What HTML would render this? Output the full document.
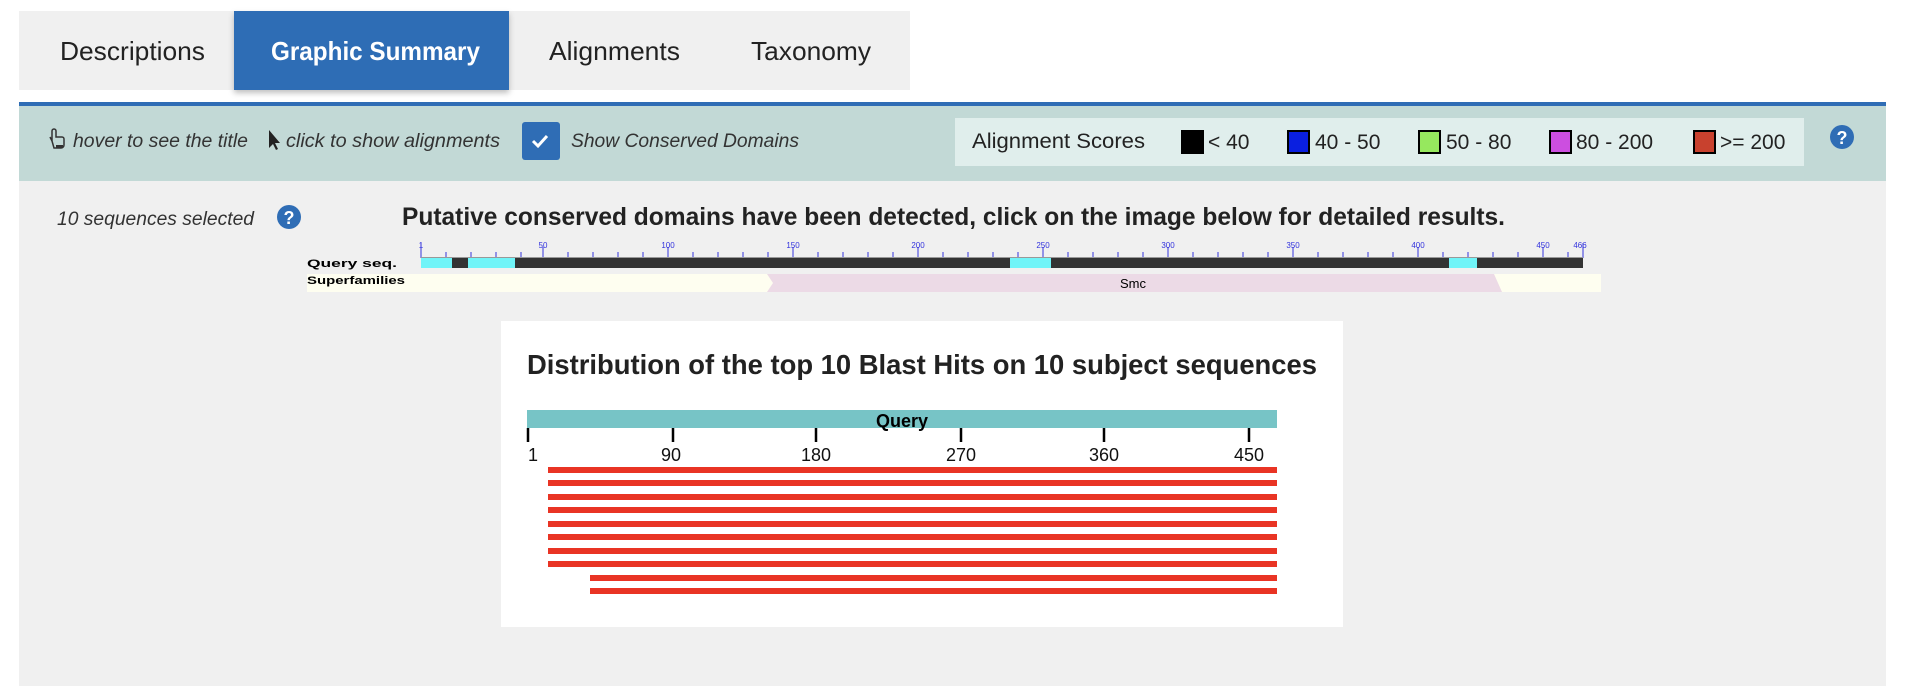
<!DOCTYPE html>
<html><head><meta charset="utf-8"><style>
html,body{margin:0;padding:0;background:#fff;width:1910px;height:686px;overflow:hidden}
svg{display:block}
text{font-family:"Liberation Sans",sans-serif}
</style></head><body>
<svg width="1910" height="686" viewBox="0 0 1910 686" xmlns="http://www.w3.org/2000/svg">
<defs><filter id="sh" x="-10%" y="-10%" width="120%" height="130%"><feDropShadow dx="0" dy="3" stdDeviation="3" flood-color="#000" flood-opacity="0.25"/></filter></defs>
<rect x="19" y="11" width="891" height="79" fill="#f0f0f0"/>
<rect x="234" y="11" width="275" height="79" fill="#2f6db5" filter="url(#sh)"/>
<text x="60" y="60" font-size="26" fill="#222" textLength="145" lengthAdjust="spacingAndGlyphs">Descriptions</text>
<text x="271" y="60" font-size="26" font-weight="bold" fill="#fff" textLength="209" lengthAdjust="spacingAndGlyphs">Graphic Summary</text>
<text x="549" y="60" font-size="26" fill="#222" textLength="131" lengthAdjust="spacingAndGlyphs">Alignments</text>
<text x="751" y="60" font-size="26" fill="#222" textLength="120" lengthAdjust="spacingAndGlyphs">Taxonomy</text>
<rect x="19" y="102" width="1867" height="4" fill="#2f6db5"/>
<rect x="19" y="106" width="1867" height="75" fill="#c2d9d6"/>
<rect x="19" y="181" width="1867" height="505" fill="#f0f0f0"/>
<path d="M52 141 l0-10 a2 2 0 0 1 4 0 l0 6 l6 0 a2 2 0 0 1 2 2 l0 6 a3 3 0 0 1-3 3 l-7 0 z M50 137 l2 4" fill="none" stroke="#333" stroke-width="1.5"/>
<rect x="56" y="145" width="7" height="3" fill="#333"/>
<text x="73" y="147" font-size="19" font-style="italic" fill="#333" textLength="175" lengthAdjust="spacingAndGlyphs">hover to see the title</text>
<path d="M269 130 l0 18 l4-4 l3 6 l2-1 l-3-6 l5 0 z" fill="#222"/>
<text x="286" y="147" font-size="19" font-style="italic" fill="#333" textLength="214" lengthAdjust="spacingAndGlyphs">click to show alignments</text>
<rect x="522" y="122" width="38" height="38" rx="3" fill="#2f6db5"/>
<path d="M533 141 l5 5 l9-10" fill="none" stroke="#fff" stroke-width="3"/>
<text x="571" y="147" font-size="19" font-style="italic" fill="#333" textLength="228" lengthAdjust="spacingAndGlyphs">Show Conserved Domains</text>
<rect x="955" y="118" width="849" height="48" fill="#e0eeec"/>
<text x="972" y="148" font-size="21" fill="#222" textLength="173" lengthAdjust="spacingAndGlyphs">Alignment Scores</text>
<rect x="1182" y="131" width="21" height="22" fill="#000" stroke="#000" stroke-width="2"/>
<text x="1208" y="149" font-size="21" fill="#222">&lt; 40</text>
<rect x="1288" y="131" width="21" height="22" fill="#0a1fe0" stroke="#000" stroke-width="2"/>
<text x="1315" y="149" font-size="21" fill="#222">40 - 50</text>
<rect x="1419" y="131" width="21" height="22" fill="#96e85e" stroke="#000" stroke-width="2"/>
<text x="1446" y="149" font-size="21" fill="#222">50 - 80</text>
<rect x="1550" y="131" width="21" height="22" fill="#cc4ee0" stroke="#000" stroke-width="2"/>
<text x="1576" y="149" font-size="21" fill="#222">80 - 200</text>
<rect x="1694" y="131" width="21" height="22" fill="#c8412e" stroke="#000" stroke-width="2"/>
<text x="1720" y="149" font-size="21" fill="#222">&gt;= 200</text>
<circle cx="1842" cy="137" r="12" fill="#2f6db5"/>
<text x="1842" y="144" font-size="18" font-weight="bold" fill="#fff" text-anchor="middle">?</text>
<text x="57" y="225" font-size="19" font-style="italic" fill="#333" textLength="197" lengthAdjust="spacingAndGlyphs">10 sequences selected</text>
<circle cx="289" cy="217" r="12" fill="#2f6db5"/>
<text x="289" y="224" font-size="18" font-weight="bold" fill="#fff" text-anchor="middle">?</text>
<text x="402" y="225" font-size="25" font-weight="bold" fill="#222" textLength="1103" lengthAdjust="spacingAndGlyphs">Putative conserved domains have been detected, click on the image below for detailed results.</text>
<g font-family="Liberation Mono,monospace">
<g stroke="#3333dd" stroke-width="1">
<path d="M421 243v15 M446 252v6 M471 252v6 M496 252v6 M521 252v6 M543 247v11 M568 252v6 M593 252v6 M618 252v6 M643 252v6 M668 247v11 M693 252v6 M718 252v6 M743 252v6 M768 252v6 M793 247v11 M818 252v6 M843 252v6 M868 252v6 M893 252v6 M918 247v11 M943 252v6 M968 252v6 M993 252v6 M1018 252v6 M1043 247v11 M1068 252v6 M1093 252v6 M1118 252v6 M1143 252v6 M1168 247v11 M1193 252v6 M1218 252v6 M1243 252v6 M1268 252v6 M1293 247v11 M1318 252v6 M1343 252v6 M1368 252v6 M1393 252v6 M1418 247v11 M1443 252v6 M1468 252v6 M1493 252v6 M1518 252v6 M1543 247v11 M1568 252v6 M1583 243v15"/>
</g>
<g font-size="8" fill="#3333dd" text-anchor="middle">
<text x="421" y="248">1</text><text x="543" y="248">50</text><text x="668" y="248">100</text><text x="793" y="248">150</text><text x="918" y="248">200</text><text x="1043" y="248">250</text><text x="1168" y="248">300</text><text x="1293" y="248">350</text><text x="1418" y="248">400</text><text x="1543" y="248">450</text><text x="1580" y="248">466</text>
</g>
<rect x="421" y="257" width="1162" height="11" fill="#333"/>
<rect x="421" y="257" width="1162" height="1" fill="#999"/>
<rect x="421" y="258" width="31" height="10" fill="#70f4f8"/>
<rect x="468" y="258" width="47" height="10" fill="#70f4f8"/>
<rect x="1010" y="258" width="41" height="10" fill="#70f4f8"/>
<rect x="1449" y="258" width="28" height="10" fill="#70f4f8"/>
<text x="307" y="267" font-size="11" font-weight="bold" fill="#000" textLength="90" lengthAdjust="spacingAndGlyphs">Query seq.</text>
<rect x="307" y="274" width="1294" height="18" fill="#fefef0"/>
<path d="M767 274 L1494 274 L1502 292 L767 292 L773 283 Z" fill="#ecdae6"/>
<text x="307" y="284" font-size="11" font-weight="bold" fill="#000" textLength="98" lengthAdjust="spacingAndGlyphs">Superfamilies</text>
<text x="1133" y="288" font-size="13" fill="#000" text-anchor="middle">Smc</text>
</g>
<rect x="501" y="321" width="842" height="306" fill="#fff"/>
<text x="527" y="374" font-size="28" font-weight="bold" fill="#222" textLength="790" lengthAdjust="spacingAndGlyphs">Distribution of the top 10 Blast Hits on 10 subject sequences</text>
<rect x="527" y="410" width="750" height="18" fill="#77c4c6"/>
<text x="902" y="427" font-size="18" font-weight="bold" fill="#000" text-anchor="middle">Query</text>
<g stroke="#000" stroke-width="2.5"><path d="M528 428v14 M673 428v14 M816 428v14 M961 428v14 M1104 428v14 M1249 428v14"/></g>
<g font-size="18" fill="#111" text-anchor="middle">
<text x="533" y="461">1</text><text x="671" y="461">90</text><text x="816" y="461">180</text><text x="961" y="461">270</text><text x="1104" y="461">360</text><text x="1249" y="461">450</text>
</g>
<g fill="#e93424">
<rect x="548" y="467" width="729" height="6"/>
<rect x="548" y="480" width="729" height="6"/>
<rect x="548" y="494" width="729" height="6"/>
<rect x="548" y="507" width="729" height="6"/>
<rect x="548" y="521" width="729" height="6"/>
<rect x="548" y="534" width="729" height="6"/>
<rect x="548" y="548" width="729" height="6"/>
<rect x="548" y="561" width="729" height="6"/>
<rect x="590" y="575" width="687" height="6"/>
<rect x="590" y="588" width="687" height="6"/>
</g>
</svg>
</body></html>
